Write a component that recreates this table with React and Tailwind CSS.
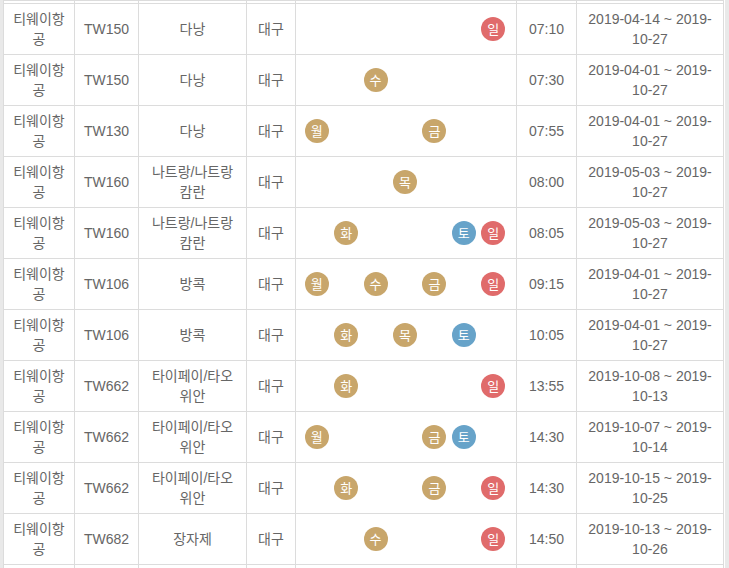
import React from "react";

const DAYS = ["월", "화", "수", "목", "금", "토", "일"];

const dayColor = (d) =>
  d === "일" ? "bg-[#e06b6b]" : d === "토" ? "bg-[#67a3c9]" : "bg-[#c8a66b]";

const rows = [
  { no: "TW150", dest: ["다낭"], days: ["일"], time: "07:10", from: "2019-04-14", to: "10-27" },
  { no: "TW150", dest: ["다낭"], days: ["수"], time: "07:30", from: "2019-04-01", to: "10-27" },
  { no: "TW130", dest: ["다낭"], days: ["월", "금"], time: "07:55", from: "2019-04-01", to: "10-27" },
  { no: "TW160", dest: ["나트랑/나트랑", "캄란"], days: ["목"], time: "08:00", from: "2019-05-03", to: "10-27" },
  { no: "TW160", dest: ["나트랑/나트랑", "캄란"], days: ["화", "토", "일"], time: "08:05", from: "2019-05-03", to: "10-27" },
  { no: "TW106", dest: ["방콕"], days: ["월", "수", "금", "일"], time: "09:15", from: "2019-04-01", to: "10-27" },
  { no: "TW106", dest: ["방콕"], days: ["화", "목", "토"], time: "10:05", from: "2019-04-01", to: "10-27" },
  { no: "TW662", dest: ["타이페이/타오", "위안"], days: ["화", "일"], time: "13:55", from: "2019-10-08", to: "10-13" },
  { no: "TW662", dest: ["타이페이/타오", "위안"], days: ["월", "금", "토"], time: "14:30", from: "2019-10-07", to: "10-14" },
  { no: "TW662", dest: ["타이페이/타오", "위안"], days: ["화", "금", "일"], time: "14:30", from: "2019-10-15", to: "10-25" },
  { no: "TW682", dest: ["장자제"], days: ["수", "일"], time: "14:50", from: "2019-10-13", to: "10-26" },
];

const cell = "border border-[#dcdcdc] px-[4px] py-[5px] text-center align-middle";

function Lines({ items }) {
  return items.map((t, i) => (
    <div key={i} className="whitespace-nowrap">
      {t}
    </div>
  ));
}

function SpacerRow({ h }) {
  return (
    <tr className={h}>
      {Array.from({ length: 7 }).map((_, i) => (
        <td key={i} className="border border-[#dcdcdc] p-0" />
      ))}
    </tr>
  );
}

export default function App() {
  return (
    <div
      className="flex h-[568px] overflow-hidden bg-white text-[14px] leading-[20px] text-[#666]"
      style={{ fontFamily: '"Liberation Sans", Arial, "Noto Sans CJK KR", sans-serif' }}
    >
      <div className="w-[3px] shrink-0 bg-[#e9e9e9]" />
      <table className="w-[720px] shrink-0 table-fixed border-collapse">
        <colgroup>
          <col className="w-[71px]" />
          <col className="w-[64px]" />
          <col className="w-[108px]" />
          <col className="w-[49px]" />
          <col className="w-[221px]" />
          <col className="w-[60px]" />
          <col className="w-[147px]" />
        </colgroup>
        <tbody>
          <SpacerRow h="h-[3px]" />
          {rows.map((r, i) => (
            <tr key={i} className="h-[51px]">
              <td className={cell}>
                <Lines items={["티웨이항", "공"]} />
              </td>
              <td className={cell}>{r.no}</td>
              <td className={cell}>
                <Lines items={r.dest} />
              </td>
              <td className={cell}>대구</td>
              <td className="border border-[#dcdcdc] py-0 pl-[6px] pr-[8px] align-middle">
                <div className="flex">
                  {DAYS.map((d) => (
                    <div key={d} className="flex w-[29.5px] justify-center">
                      {r.days.includes(d) && (
                        <span
                          className={`flex h-[24px] w-[24px] items-center justify-center rounded-full text-[13px] leading-none text-white ${dayColor(d)}`}
                        >
                          {d}
                        </span>
                      )}
                    </div>
                  ))}
                </div>
              </td>
              <td className={cell}>{r.time}</td>
              <td className={cell}>
                <Lines items={[`${r.from} ~ 2019-`, r.to]} />
              </td>
            </tr>
          ))}
          <SpacerRow h="h-[20px]" />
        </tbody>
      </table>
      <div className="w-[1px] shrink-0 bg-white" />
      <div className="flex-1 bg-[#e9e9e9]" />
    </div>
  );
}
